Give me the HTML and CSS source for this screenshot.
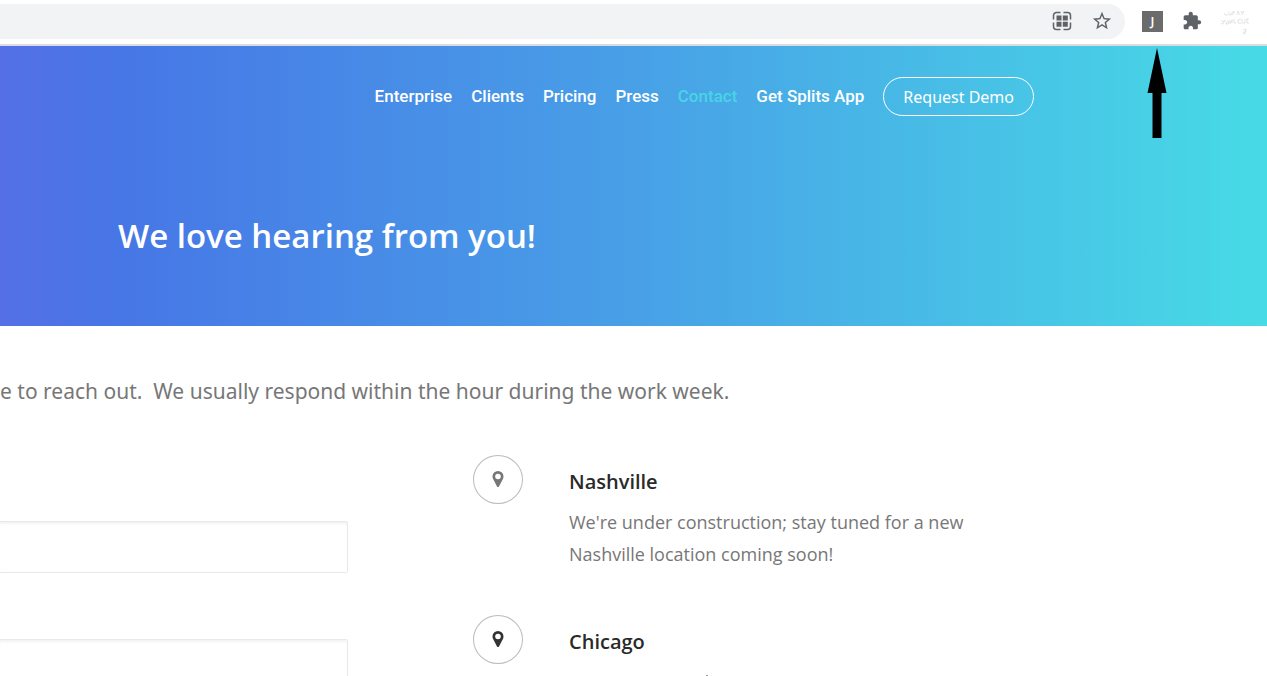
FILE: index.html
```html
<!DOCTYPE html>
<html lang="en">
<head>
<meta charset="utf-8">
<title>Contact</title>
<meta name="viewport" content="width=device-width, initial-scale=1">
<link rel="stylesheet" href="styles.css">
</head>
<body>
<div class="toolbar">
  <div class="omnibox">
    <button class="tool" type="button" aria-label="Apps">
      <svg width="20" height="20" viewBox="0 0 20 20" fill="none" stroke="#5f6368" stroke-width="1.500">
        <path d="M1.500 8.500V4.500a3 3 0 0 1 3-3h4M11.500 1.500h4a3 3 0 0 1 3 3v4M18.500 11.500v4a3 3 0 0 1-3 3h-4M8.500 18.500h-4a3 3 0 0 1-3-3v-4"/>
        <path d="M4.500 4.500h5v5h-5zM10.800 4.500h5v5h-5zM4.500 10.800h5v5h-5zM10.800 10.800h5v5h-5z" fill="#5f6368" stroke="none"/>
      </svg>
    </button>
    <button class="tool" type="button" aria-label="Bookmark">
      <svg width="22" height="22" viewBox="0 0 24 24" fill="#5f6368"><path d="M22 9.240l-7.190-.62L12 2 9.190 8.630 2 9.240l5.460 4.730L5.820 21 12 17.270 18.180 21l-1.630-7.030L22 9.240zM12 15.400l-3.760 2.270 1-4.280-3.320-2.880 4.380-.38L12 6.100l1.710 4.040 4.380.38-3.320 2.880 1 4.280L12 15.400z"/></svg>
    </button>
  </div>
  <div class="extensions">
    <button class="extension" type="button">J</button>
    <button class="tool" type="button" aria-label="Extensions">
      <svg width="20" height="20" viewBox="0 0 24 24" fill="#5f6368"><path d="M20.500 11H19V7c0-1.100-.9-2-2-2h-4V3.500C13 2.120 11.880 1 10.500 1S8 2.120 8 3.500V5H4c-1.100 0-1.990.9-1.990 2v3.800H3.500c1.490 0 2.700 1.210 2.700 2.700s-1.210 2.700-2.700 2.700H2V20c0 1.100.9 2 2 2h3.800v-1.500c0-1.490 1.210-2.700 2.700-2.700s2.700 1.210 2.700 2.700V22H17c1.100 0 2-.9 2-2v-4h1.500c1.380 0 2.500-1.120 2.500-2.500S21.880 11 20.500 11z"/></svg>
    </button>
    <button class="tool" type="button" aria-label="Profile">
      <svg width="30" height="28" viewBox="0 0 30 28" fill="none" stroke="#dcdcdc" stroke-width=".8"><path d="M4 6l1 2h3M9 5v3l3-.5V5M13 8V4l2 2M17 8l1-4 2 4M21 4l1 2 2-2-2 4M1 13l2 2 2-2-2 4-2-.5M6 17l1-3 2 1-1 2zM10 13v4M12 12v4M10 15h2M14 12v4h2M21 12l-3 1v3l3 .5M22 12v4h3v-4M26 12h3M27 12v4h2M23 23l3-1-1 5-2-1 3-2"/></svg>
    </button>
  </div>
</div>

<header class="hero">
  <nav class="nav">
    <a href="#">Enterprise</a>
    <a href="#">Clients</a>
    <a href="#">Pricing</a>
    <a href="#">Press</a>
    <a class="current" href="#">Contact</a>
    <a href="#">Get Splits App</a>
    <a class="demo" href="#">Request Demo</a>
  </nav>
  <h1 class="title">We love hearing from you!</h1>
  <svg class="pointer" width="20" height="92" viewBox="0 0 20 92"><path d="M10 1L19.500 46H14.500V91H5.500V46H.5z"/></svg>
</header>

<main class="content">
  <p class="lead">e to reach out.&nbsp; We usually respond within the hour during the work week.</p>
  <div class="columns">
    <form class="form">
      <input class="field" type="text" aria-label="Name">
      <input class="field" type="text" aria-label="Email">
    </form>
    <div class="locations">
      <section class="location">
        <span class="pin muted"><svg width="12" height="18" viewBox="0 1 12 18" fill="currentColor"><path fill-rule="evenodd" d="M6 1a5.500 5.500 0 0 1 5.500 5.500c0 1-.2 1.600-.5 2.200L7 16.400c-.4.800-1.600.8-2 0L1 8.700C.7 8.100.5 7.500.5 6.500A5.500 5.500 0 0 1 6 1zm0 2.700a2.800 2.800 0 1 0 0 5.600 2.800 2.800 0 0 0 0-5.600z"/></svg></span>
        <div>
          <h2 class="city">Nashville</h2>
          <p class="text">We're under construction; stay tuned for a new<br>Nashville location coming soon!</p>
        </div>
      </section>
      <section class="location">
        <span class="pin"><svg width="12" height="18" viewBox="0 1 12 18" fill="currentColor"><path fill-rule="evenodd" d="M6 1a5.500 5.500 0 0 1 5.500 5.500c0 1-.2 1.600-.5 2.200L7 16.400c-.4.800-1.600.8-2 0L1 8.700C.7 8.100.5 7.500.5 6.500A5.500 5.500 0 0 1 6 1zm0 2.700a2.800 2.800 0 1 0 0 5.600 2.800 2.800 0 0 0 0-5.600z"/></svg></span>
        <div>
          <h2 class="city">Chicago</h2>
          <div class="stem"></div>
        </div>
      </section>
    </div>
  </div>
</main>
</body>
</html>
```
FILE: styles.css
```css
* { box-sizing: border-box; }
body {
  margin: 0;
  height: 100vh;
  overflow: hidden;
  background: #fff;
  color: #777;
  font-family: "Open Sans", "Noto Sans", sans-serif;
}
button { padding: 0; border: 0; background: none; font: inherit; }
h1, h2, p { margin: 0; }

.toolbar {
  display: flex;
  align-items: center;
  gap: 17px;
  height: 46px;
  padding: 0 17px 2px 0;
  border-bottom: 2px solid #dadce0;
}
.omnibox {
  flex: 1;
  display: flex;
  align-items: center;
  justify-content: flex-end;
  gap: 19px;
  height: 35px;
  padding-right: 12px;
  border-radius: 0 18px 18px 0;
  background: #f1f3f4;
}
.tool { display: flex; }
.extensions { display: flex; align-items: center; gap: 18px; }
.extension {
  width: 21px;
  height: 21px;
  background: #6b6b6b;
  color: #fff;
  font-size: 13px;
  font-weight: 600;
  line-height: 20px;
}
.extension + .tool { padding-left: 1px; }

.hero {
  position: relative;
  height: 280px;
  background: linear-gradient(90deg, #5570e7 0%, #4776e6 9%, #48a0e7 50%, #47dbe6 100%);
}
.nav {
  display: flex;
  align-items: center;
  justify-content: flex-end;
  gap: 19px;
  padding: 31px 233px 0 0;
}
.nav a {
  padding-bottom: 2px;
  color: #fff;
  font: 500 17px/24px Roboto, sans-serif;
  text-decoration: none;
}
.nav .current { color: #47d5e6; }
.nav .demo {
  padding: 1px 19px 0;
  border: 1px solid #fff;
  border-radius: 20px;
  font: 400 16px/36px "Noto Sans", "Open Sans", sans-serif;
}
.title {
  padding: 96px 118px 0;
  color: #fff;
  font-size: 33px;
  font-weight: 600;
  line-height: 48px;
}
.pointer { position: absolute; top: 1px; right: 100px; }

.content { padding-top: 49px; }
.lead { font-family: "Noto Sans", "Open Sans", sans-serif; font-size: 21px; line-height: 32px; white-space: nowrap; }
.columns {
  display: grid;
  grid-template-columns: minmax(0, 348fr) minmax(0, 794fr);
  gap: 125px;
  padding-top: 48px;
}
.form { display: grid; gap: 66px; align-content: start; padding-top: 66px; }
.field {
  width: 100%;
  height: 52px;
  border: 1px solid #e8e8e8;
  border-left: 0;
  border-radius: 0 2px 2px 0;
  box-shadow: inset 0 3px 3px -1px #f3f3f3;
  font: inherit;
}
.locations { display: grid; gap: 45px; align-content: start; }
.location { display: flex; gap: 46px; }
.pin {
  display: flex;
  align-items: center;
  justify-content: center;
  width: 50px;
  height: 49px;
  border: 1px solid #bbb;
  border-radius: 50%;
  color: #333;
}
.muted { color: #777; }
.city { padding-top: 11px; color: #2a2a2a; font-size: 20px; font-weight: 600; line-height: 32px; }
.text { padding-top: 8px; font-size: 18px; line-height: 32px; }
.stem { width: 2px; height: 14px; margin: 17px 0 0 137px; background: #999; }
```
